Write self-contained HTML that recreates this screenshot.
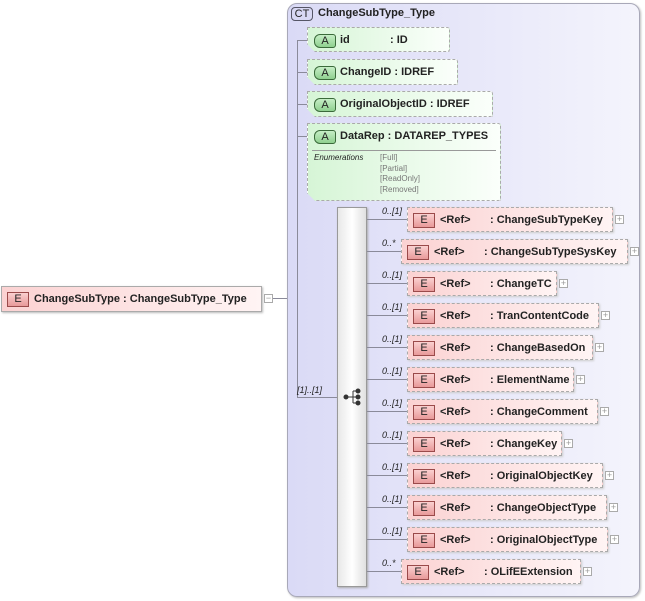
<!DOCTYPE html>
<html><head><meta charset="utf-8"><style>
*{margin:0;padding:0;box-sizing:border-box}
body{width:645px;height:601px;background:#fff;position:relative;overflow:hidden;font-family:"Liberation Sans",Arial,sans-serif;font-size:11px;font-weight:bold;color:#222}
.a{position:absolute}
.ct{left:287px;top:3px;width:353px;height:594px;border:1px solid #a8a8b8;border-radius:10px;background:linear-gradient(90deg,#dadaf6,#f4f4fc);box-shadow:1px 1px 2px #bbb}
.line{position:absolute;background:#8a8a9a}
.attr{position:absolute;border:1px dashed #aaa;background:linear-gradient(90deg,#d6f5d6,#fbfffb);clip-path:polygon(8px 0,100% 0,100% 100%,8px 100%,0 calc(100% - 8px),0 0);border-radius:0 3px 3px 0;box-shadow:1px 1px 2px #ccc}
.ab{position:absolute;left:6px;top:6px;width:22px;height:14px;border:1px solid #3a6a3a;border-radius:6px 3px 3px 6px;background:linear-gradient(#c6eec6,#8fd08f);font-weight:normal;font-size:11px;text-align:center;line-height:12px;color:#222}
.el{position:absolute;height:25px;border:1px dashed #aaa;background:linear-gradient(90deg,#fbd2d2,#fff4f4);box-shadow:1px 1px 2px #ccc}
.eb{position:absolute;left:5px;top:5px;width:22px;height:15px;border:1px solid #9a4a4a;background:linear-gradient(#fbd0d0,#e89a9a);font-weight:normal;text-align:center;line-height:13px;color:#222}
.pl{position:absolute;width:9px;height:9px;border:1px solid #aaa;background:#fff;font-size:9px;line-height:7px;text-align:center;color:#999;font-weight:normal}
.m{position:absolute;font-style:italic;font-weight:normal;font-size:9px;color:#222}
</style></head><body>
<div class="a ct"></div>
<div class="a" style="left:291px;top:7px;width:22px;height:14px;border:1px solid #556;border-radius:4px;background:#d8d8f4;font-weight:normal;text-align:center;line-height:12px">CT</div>
<div class="a" style="left:318px;top:7px">ChangeSubType_Type</div>

<div class="line" style="left:297px;top:40px;width:1px;height:358px"></div>
<div class="line" style="left:297px;top:40px;width:12px;height:1px"></div>
<div class="line" style="left:297px;top:72px;width:12px;height:1px"></div>
<div class="line" style="left:297px;top:104px;width:12px;height:1px"></div>
<div class="line" style="left:297px;top:136px;width:12px;height:1px"></div>
<div class="line" style="left:297px;top:397px;width:40px;height:1px"></div>

<div class="attr" style="left:307px;top:27px;width:143px;height:25px"><div class="ab">A</div><span class="a" style="left:32px;top:6px">id</span><span class="a" style="left:82px;top:6px">: ID</span></div>
<div class="attr" style="left:307px;top:59px;width:151px;height:26px"><div class="ab">A</div><span class="a" style="left:32px;top:6px">ChangeID : IDREF</span></div>
<div class="attr" style="left:307px;top:91px;width:186px;height:26px"><div class="ab">A</div><span class="a" style="left:32px;top:6px">OriginalObjectID : IDREF</span></div>
<div class="attr" style="left:307px;top:123px;width:194px;height:78px"><div class="ab">A</div><span class="a" style="left:32px;top:6px">DataRep : DATAREP_TYPES</span>
<div class="a" style="left:4px;top:26px;width:184px;height:1px;background:#999"></div>
<span class="a" style="left:6px;top:29px;font-style:italic;font-size:8px;font-weight:normal">Enumerations</span>
<div class="a" style="left:72px;top:29px;font-size:8px;font-weight:normal;color:#777;line-height:10.5px">[Full]<br>[Partial]<br>[ReadOnly]<br>[Removed]</div></div>

<div class="a" style="left:337px;top:207px;width:30px;height:380px;border:1px solid #999;background:linear-gradient(90deg,#e8e8e8,#fff 50%,#e0e0e0);box-shadow:1px 1px 2px #aaa"></div>
<svg class="a" style="left:343px;top:388px" width="20" height="18"><g fill="#333" stroke="#333"><circle cx="3" cy="9" r="2"/><circle cx="15" cy="3" r="2"/><circle cx="15" cy="9" r="2"/><circle cx="15" cy="15" r="2"/><path d="M3 9H10M10 3V15M10 3H15M10 9H15M10 15H15" fill="none"/></g></svg>
<span class="m" style="left:297px;top:385px">[1]..[1]</span>

<div class="a" style="left:1px;top:286px;width:261px;height:26px;border:1px solid #aaa;background:linear-gradient(90deg,#fbd2d2,#fff4f4);box-shadow:1px 1px 2px #bbb"><div class="eb">E</div><span class="a" style="left:32px;top:6px">ChangeSubType : ChangeSubType_Type</span></div>
<div class="pl" style="left:264px;top:294px">−</div>
<div class="line" style="left:273px;top:298px;width:14px;height:1px"></div>

<div id="els"></div>
<script>
const rows=[["0..[1]",407,613,"ChangeSubTypeKey"],["0..*",401,628,"ChangeSubTypeSysKey"],["0..[1]",407,557,"ChangeTC"],["0..[1]",407,599,"TranContentCode"],["0..[1]",407,593,"ChangeBasedOn"],["0..[1]",407,574,"ElementName"],["0..[1]",407,598,"ChangeComment"],["0..[1]",407,562,"ChangeKey"],["0..[1]",407,603,"OriginalObjectKey"],["0..[1]",407,607,"ChangeObjectType"],["0..[1]",407,608,"OriginalObjectType"],["0..*",401,581,"OLifEExtension"]];
let h="";rows.forEach((r,i)=>{const cy=218+i*32;
h+=`<div class="line" style="left:367px;top:${cy+1}px;width:${r[1]-367}px;height:1px"></div>`;
h+=`<span class="m" style="left:${r[1]-(r[0]=="0..*"?19:25)}px;top:${cy-12}px">${r[0]}</span>`;
h+=`<div class="el" style="left:${r[1]}px;top:${cy-11}px;width:${r[2]-r[1]}px"><div class="eb">E</div><span class="a" style="left:32px;top:6px">&lt;Ref&gt;</span><span class="a" style="left:82px;top:6px">: ${r[3]}</span></div>`;
h+=`<div class="pl" style="left:${r[2]+2}px;top:${cy-3}px">+</div>`;});
document.getElementById("els").innerHTML=h;
</script>
</body></html>
